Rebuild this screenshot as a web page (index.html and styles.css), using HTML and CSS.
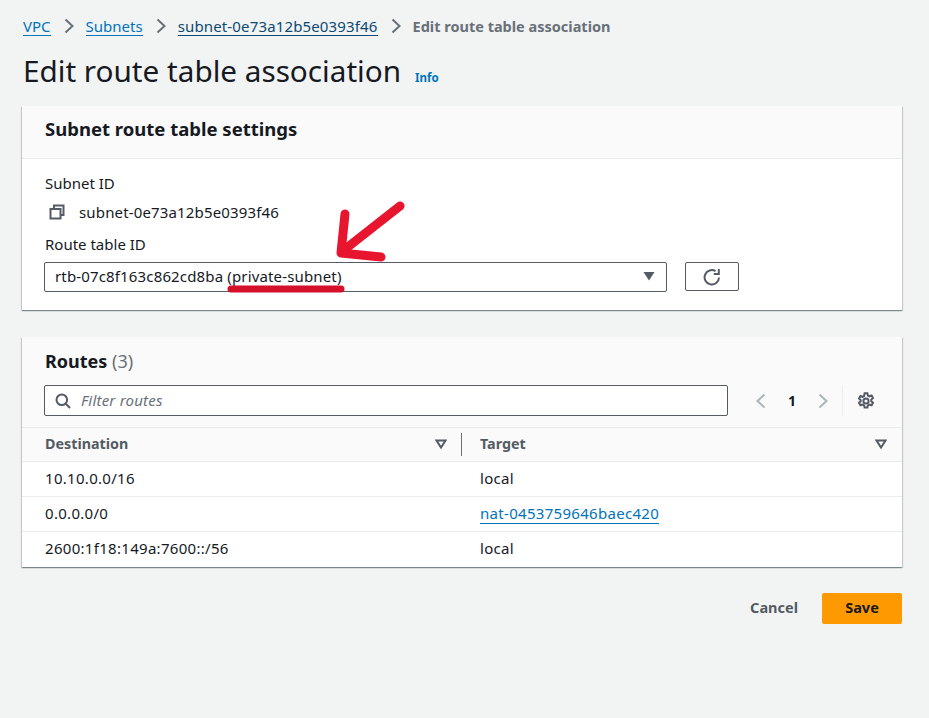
FILE: index.html
```html
<!DOCTYPE html>
<html lang="en">
<head>
    <meta charset="UTF-8">
    <title>Edit route table association</title>
    <link rel="stylesheet" href="styles.css">
</head>
<body>
    <div class="page">
        <nav class="crumbs">
            <a href="#">VPC</a>
            <svg class="crumb-sep" viewBox="0 0 10 16"><path d="M1.5 1.5 8.5 8l-7 6.5"/></svg>
            <a href="#">Subnets</a>
            <svg class="crumb-sep" viewBox="0 0 10 16"><path d="M1.5 1.5 8.5 8l-7 6.5"/></svg>
            <a href="#" class="dark">subnet-0e73a12b5e0393f46</a>
            <svg class="crumb-sep" viewBox="0 0 10 16"><path d="M1.5 1.5 8.5 8l-7 6.5"/></svg>
            <span class="crumb-now">Edit route table association</span>
        </nav>

        <div class="title-row">
            <h1>Edit route table association</h1>
            <a href="#" class="info">Info</a>
        </div>

        <section class="card">
            <div class="card-head">
                <h2>Subnet route table settings</h2>
            </div>
            <div class="card-body">
                <div class="label">Subnet ID</div>
                <div class="copy-row">
                    <svg class="copy-icon" viewBox="0 0 16 16"><path d="M5 4.5V1.5h9.5v9.5h-3"/><path d="M1.5 5h10v9.5h-10z"/></svg>
                    <span>subnet-0e73a12b5e0393f46</span>
                </div>
                <div class="label">Route table ID</div>
                <div class="select-row">
                    <div class="select">
                        <span>rtb-07c8f163c862cd8ba (private-subnet)</span>
                        <svg class="caret" viewBox="0 0 12 10"><path d="M0.5 1h11L6 9.5z"/></svg>
                    </div>
                    <button class="refresh">
                        <svg viewBox="0 0 18 18"><path d="M16 9.5A7.2 7.2 0 1 1 12.6 3.2"/><path d="M15.8 1v5h-5"/></svg>
                    </button>
                </div>
            </div>
        </section>

        <section class="card routes">
            <div class="routes-head">
                <h2 class="routes-title">Routes <span class="count">(3)</span></h2>
                <div class="tools">
                    <div class="filter">
                        <svg class="search" viewBox="0 0 16 16"><circle cx="6.8" cy="6.8" r="5.3"/><path d="M10.8 10.8 15 15"/></svg>
                        <span>Filter routes</span>
                    </div>
                    <div class="pager">
                        <svg viewBox="0 0 10 16"><path d="M8.5 1.5 1.5 8l7 6.5"/></svg>
                        <span class="page-no">1</span>
                        <svg viewBox="0 0 10 16"><path d="M1.5 1.5 8.5 8l-7 6.5"/></svg>
                    </div>
                    <svg class="gear" viewBox="0 0 18 18"><circle cx="9" cy="9" r="2.6"/><path d="M7.6 1.2h2.8l.5 2.3 1.5.8 2.2-.8 1.4 2.5-1.7 1.6v1.6l1.7 1.6-1.4 2.5-2.2-.8-1.5.8-.5 2.3H7.6l-.5-2.3-1.5-.8-2.2.8-1.4-2.5 1.7-1.6V8.1L2 6.5 3.4 4l2.2.8 1.5-.8z"/></svg>
                </div>
            </div>
            <div class="row row-head">
                <div class="cell">
                    <span>Destination</span>
                    <svg class="sort" viewBox="0 0 12 10"><path d="M1.5 1.5h9L6 8.5z"/></svg>
                </div>
                <div class="cell">
                    <span>Target</span>
                    <svg class="sort" viewBox="0 0 12 10"><path d="M1.5 1.5h9L6 8.5z"/></svg>
                </div>
            </div>
            <div class="row">
                <div class="cell">10.10.0.0/16</div>
                <div class="cell">local</div>
            </div>
            <div class="row">
                <div class="cell">0.0.0.0/0</div>
                <div class="cell"><a href="#">nat-0453759646baec420</a></div>
            </div>
            <div class="row">
                <div class="cell">2600:1f18:149a:7600::/56</div>
                <div class="cell">local</div>
            </div>
        </section>

        <div class="actions">
            <a href="#" class="cancel">Cancel</a>
            <button class="save">Save</button>
        </div>

        <!-- red marks drawn over the screenshot -->
        <svg class="marks" viewBox="0 0 929 718">
            <path d="M400 206 344 250"/>
            <path d="M345 214 341 253 381 257"/>
            <path class="line" d="M231 289H341"/>
        </svg>
    </div>
</body>
</html>
```
FILE: styles.css
```css
* {
    margin: 0;
    padding: 0;
    box-sizing: border-box;
}
body {
    background: #f2f3f3;
    color: #16191f;
    font-family: "Noto Sans", "Open Sans", sans-serif;
    font-size: 15px;
}
a {
    color: #0073bb;
    text-decoration: none;
}
.page {
    position: relative;
    width: 929px;
    height: 718px;
    padding: 15px 27px 0 22px;
}

/* breadcrumb */
.crumbs {
    display: flex;
    align-items: center;
    height: 22px;
    line-height: 22px;
    padding-left: 1px;
}
.crumbs a {
    border-bottom: 1px solid #0073bb;
    line-height: 18px;
    padding-top: 1px;
}
.crumbs a.dark {
    color: #0a4a74;
    border-color: #0a4a74;
    letter-spacing: .15px;
}
.crumb-sep {
    flex: none;
    width: 10px;
    height: 16px;
    margin: 0 12px 0 13px;
    fill: none;
    stroke: #687078;
    stroke-width: 2;
}
.crumb-now {
    color: #687078;
    font-size: 14.5px;
    font-weight: 700;
}

.title-row {
    display: flex;
    align-items: baseline;
    margin-top: 15px;
    height: 38px;
    padding-left: 1px;
}
h1 {
    font-size: 29.7px;
    font-weight: 400;
    line-height: 38px;
}
.info {
    margin-left: 14px;
    font-size: 11.5px;
    font-weight: 700;
}

/* cards */
.card {
    background: #fff;
    margin-top: 16px;
    box-shadow: 0 1px 1px 0 rgba(0, 28, 36, .3), 1px 1px 1px 0 rgba(0, 28, 36, .15), -1px 1px 1px 0 rgba(0, 28, 36, .15);
}
.card-head {
    height: 53px;
    padding: 0 23px 6px;
    background: #fafafa;
    border-bottom: 1px solid #eaeded;
    display: flex;
    align-items: center;
}
h2 {
    font-size: 18.5px;
    font-weight: 700;
    line-height: 24px;
}
.card-body {
    height: 151px;
    padding: 14px 22px 0;
}
.label {
    line-height: 20px;
    padding-left: 1px;
}
.copy-row {
    display: flex;
    align-items: center;
    height: 28px;
    margin: 5px 0 8px;
    letter-spacing: .15px;
}
.copy-icon {
    flex: none;
    width: 16px;
    height: 16px;
    margin: 0 14px 0 5px;
    fill: #fff;
    stroke: #545b64;
    stroke-width: 2;
}
.select-row {
    display: flex;
    align-items: flex-start;
    margin-top: 8px;
}
.select {
    flex: none;
    width: 623px;
    height: 30px;
    padding: 0 11px 2px 10px;
    border: 1px solid #545b64;
    border-radius: 2px;
    display: flex;
    align-items: center;
    justify-content: space-between;
    letter-spacing: .15px;
}
.caret {
    width: 12px;
    height: 10px;
    fill: #545b64;
}
.refresh {
    width: 54px;
    height: 29px;
    margin-left: 18px;
    background: #fff;
    border: 1px solid #545b64;
    border-radius: 2px;
    display: flex;
    align-items: center;
    justify-content: center;
}
.refresh svg {
    width: 18px;
    height: 18px;
    fill: none;
    stroke: #545b64;
    stroke-width: 2;
}

/* routes table */
.routes {
    margin-top: 27px;
}
.routes-head {
    height: 91px;
    padding: 12px 22px 0;
    background: #fafafa;
    border-bottom: 1px solid #eaeded;
}
.routes-title {
    font-size: 18px;
    padding-left: 1px;
}
.count {
    color: #687078;
    font-weight: 400;
}
.tools {
    display: flex;
    align-items: center;
    margin-top: 12px;
}
.filter {
    flex: none;
    width: 684px;
    height: 31px;
    padding: 0 0 2px 10px;
    background: #fff;
    border: 1px solid #545b64;
    border-radius: 2px;
    display: flex;
    align-items: center;
    color: #687078;
    font-style: italic;
    letter-spacing: .2px;
}
.search {
    width: 16px;
    height: 16px;
    margin: 2px 10px 0 0;
    fill: none;
    stroke: #545b64;
    stroke-width: 2;
}
.pager {
    flex: none;
    display: flex;
    align-items: center;
    width: 87px;
    height: 31px;
    margin-left: 28px;
    padding-right: 14px;
    border-right: 1px solid #eaeded;
}
.pager svg {
    flex: none;
    width: 10px;
    height: 16px;
    fill: none;
    stroke: #aab7b8;
    stroke-width: 2;
}
.page-no {
    width: 52px;
    text-align: center;
    font-size: 14px;
    font-weight: 700;
}
.gear {
    flex: none;
    width: 18px;
    height: 18px;
    margin-left: 14px;
    fill: none;
    stroke: #545b64;
    stroke-width: 2;
}
.row {
    display: grid;
    grid-template-columns: 440px 1fr;
    height: 35px;
    border-bottom: 1px solid #eaeded;
    letter-spacing: .3px;
}
.row:last-child {
    border-bottom: 0;
}
.row .cell {
    display: flex;
    align-items: center;
    padding: 0 0 2px 23px;
}
.row:last-child .cell {
    padding-bottom: 4px;
}
.row .cell + .cell {
    padding-left: 18px;
}
.row .cell a {
    border-bottom: 1px solid #0073bb;
}
.row-head {
    height: 34px;
    background: #fafafa;
    color: #545b64;
    font-size: 14.3px;
    font-weight: 700;
    letter-spacing: 0;
}
.row-head .cell {
    justify-content: space-between;
    padding-right: 15px;
}
.row-head .cell:first-child {
    border-right: 1px solid #687078;
    margin: 5px 0;
    padding-right: 14px;
}
.sort {
    width: 12px;
    height: 10px;
    fill: none;
    stroke: #545b64;
    stroke-width: 2;
}

/* footer buttons */
.actions {
    display: flex;
    justify-content: flex-end;
    align-items: center;
    margin-top: 26px;
}
.cancel {
    color: #545b64;
    font-size: 14.5px;
    font-weight: 700;
    margin: 0 24px 4px 0;
}
.save {
    width: 80px;
    height: 31px;
    padding-bottom: 4px;
    background: #ff9900;
    border: 0;
    border-radius: 2px;
    color: #16191f;
    font: 700 14.5px "Noto Sans", "Open Sans", sans-serif;
}

.marks {
    position: absolute;
    left: 0;
    top: 0;
    width: 929px;
    height: 718px;
    fill: none;
    stroke: #e8152f;
    stroke-width: 9;
    stroke-linecap: round;
    stroke-linejoin: round;
    pointer-events: none;
}
.marks .line {
    stroke: #d5102a;
    stroke-width: 7;
}
```
